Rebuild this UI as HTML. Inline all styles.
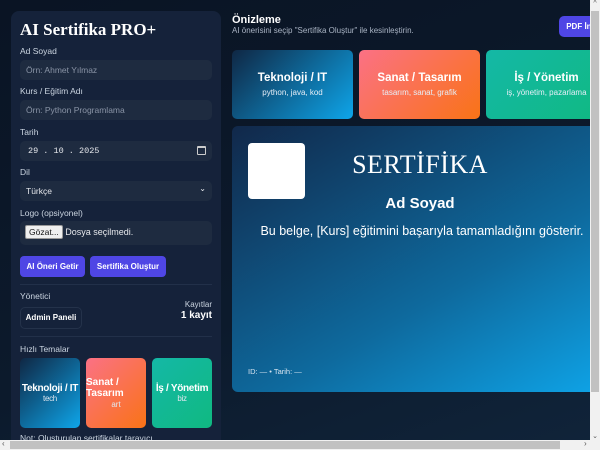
<!DOCTYPE html>
<html><head><meta charset="utf-8"><style>
*{box-sizing:border-box;margin:0;padding:0}
html,body{width:600px;height:450px;overflow:hidden}
body{background:linear-gradient(160deg,#0a1424 0%,#0c1a2c 60%,#10243a 100%);font-family:"Liberation Sans","DejaVu Sans",sans-serif;color:#e5e7eb;position:relative}
.panel{position:absolute;left:11px;top:11px;width:210px;height:460px;background:#15223a;border-radius:8px;padding:0 9px}
h1{font-family:"Liberation Serif",serif;font-size:17px;font-weight:bold;color:#fff;position:absolute;left:9px;top:9px}
.lbl{position:absolute;left:9px;font-size:8.5px;color:#cbd5e1}
.inp{position:absolute;left:9px;width:192px;height:20px;background:#1e2b40;border-radius:5px;font-size:8.5px;color:#8a94a6;padding:6px 6px;line-height:8px}
.btn{position:absolute;height:21px;background:#4f46e5;border-radius:4px;color:#fff;font-size:8px;font-weight:bold;text-align:center;line-height:21px}
.hr{position:absolute;left:9px;width:192px;height:1px;background:#223049}
.tq{position:absolute;width:60px;height:70px;border-radius:5px;color:#fff;text-align:center;font-weight:bold;font-size:10px;white-space:nowrap}
.tq small{display:block;font-weight:normal;font-size:8px;color:#e0e7ef}
.card{position:absolute;top:50px;height:69px;width:121px;border-radius:5px;text-align:center;color:#fff;font-weight:bold;font-size:11.5px;padding-top:22px}
.card small{display:block;font-weight:normal;font-size:8px;margin-top:4px;color:#e5eef7}
.tech{background:linear-gradient(135deg,#0f2744,#0ea5e9)}
.art{background:linear-gradient(135deg,#fb7185,#f97316)}
.biz{background:linear-gradient(135deg,#14b8a6,#10b981)}
</style></head><body>
<div class="panel">
<h1>AI Sertifika PRO+</h1>
<div class="lbl" style="top:35px">Ad Soyad</div>
<div class="inp" style="top:49px">Örn: Ahmet Yılmaz</div>
<div class="lbl" style="top:75px">Kurs / Eğitim Adı</div>
<div class="inp" style="top:89px">Örn: Python Programlama</div>
<div class="lbl" style="top:116px">Tarih</div>
<div class="inp" style="top:130px;color:#e5e7eb;font-family:'Liberation Mono',monospace;padding-left:8px">29 . 10 . 2025<span style="position:absolute;right:6px;top:5px;width:9px;height:9px;border:1.3px solid #ccc;border-radius:1px;border-top-width:2.5px"></span></div>
<div class="lbl" style="top:156px">Dil</div>
<div class="inp" style="top:170px;color:#e5e7eb">Türkçe<span style="position:absolute;right:6px;top:4px;font-size:8px">⌄</span></div>
<div class="lbl" style="top:197px">Logo (opsiyonel)</div>
<div class="inp" style="top:210px;height:24px;color:#e5e7eb;padding:4px 5px;font-size:9px"><span style="display:inline-block;background:#efefef;color:#111;border:1px solid #999;border-radius:2px;padding:2px 3px;font-size:8.5px">Gözat...</span> Dosya seçilmedi.</div>
<div class="btn" style="left:9px;top:245px;width:65px">AI Öneri Getir</div>
<div class="btn" style="left:79px;top:245px;width:76px">Sertifika Oluştur</div>
<div class="hr" style="top:273px"></div>
<div class="lbl" style="top:280px">Yönetici</div>
<div style="position:absolute;left:9px;top:296px;width:62px;height:22px;border:1px solid #24324a;border-radius:5px;font-size:8px;font-weight:bold;color:#fff;text-align:center;line-height:20px">Admin Paneli</div>
<div style="position:absolute;right:9px;top:288px;text-align:right;font-size:8px;color:#cbd5e1;line-height:11px">Kayıtlar<br><b style="color:#fff;font-size:10px">1 kayıt</b></div>
<div class="hr" style="top:325px"></div>
<div class="lbl" style="top:333px">Hızlı Temalar</div>
<div class="tq tech" style="left:9px;top:347px;padding-top:25px;letter-spacing:-0.3px">Teknoloji / IT<small>tech</small></div>
<div class="tq art" style="left:75px;top:347px;text-align:left;padding-top:19px;line-height:11px">Sanat /<br>Tasarım<small style="text-align:center">art</small></div>
<div class="tq biz" style="left:141px;top:347px;padding-top:25px;letter-spacing:-0.3px">İş / Yönetim<small>biz</small></div>
<div class="lbl" style="top:422px">Not: Oluşturulan sertifikalar tarayıcı</div>
</div>
<div style="position:absolute;left:232px;top:14px;font-size:11px;font-weight:bold;color:#fff">Önizleme</div>
<div style="position:absolute;left:232px;top:26px;font-size:8px;color:#aab4c4">AI önerisini seçip "Sertifika Oluştur" ile kesinleştirin.</div>
<div class="btn" style="left:559px;top:16px;width:50px;border-radius:5px;height:21px">PDF İndir</div>
<div class="card tech" style="left:232px">Teknoloji / IT<small>python, java, kod</small></div>
<div class="card art" style="left:359px">Sanat / Tasarım<small>tasarım, sanat, grafik</small></div>
<div class="card biz" style="left:486px">İş / Yönetim<small>iş, yönetim, pazarlama</small></div>
<div style="position:absolute;left:232px;top:126px;width:380px;height:266px;border-radius:6px;background:linear-gradient(150deg,#11284a 0%,#0e6a9e 60%,#0ea5e9 100%)"></div>
<div style="position:absolute;left:248px;top:143px;width:57px;height:56px;background:#fff;border-radius:4px"></div>
<div style="position:absolute;left:300px;width:240px;top:150px;text-align:center;font-family:'Liberation Serif',serif;font-size:26px;color:#fff;letter-spacing:0.5px">SERTİFİKA</div>
<div style="position:absolute;left:300px;width:240px;top:195px;text-align:center;font-size:15px;font-weight:bold;color:#fff">Ad Soyad</div>
<div style="position:absolute;left:232px;width:380px;top:224px;text-align:center;font-size:12.5px;color:#fff">Bu belge, [Kurs] eğitimini başarıyla tamamladığını gösterir.</div>
<div style="position:absolute;left:248px;top:367px;font-size:7.5px;color:#d6e4f0">ID: — • Tarih: —</div>
<div style="position:absolute;left:590px;top:0;width:10px;height:440px;background:#f1f1f1"><div style="position:absolute;left:1px;top:11px;width:8px;height:381px;background:#c1c1c1"></div><div style="position:absolute;top:0;width:10px;font-size:7px;text-align:center;color:#555">^</div><div style="position:absolute;bottom:0;width:10px;font-size:7px;text-align:center;color:#555">⌄</div></div>
<div style="position:absolute;left:0;top:440px;width:600px;height:10px;background:#f1f1f1"><div style="position:absolute;left:10px;top:1px;width:550px;height:8px;background:#c1c1c1"></div><div style="position:absolute;left:2px;top:-1px;font-size:8px;color:#555">‹</div><div style="position:absolute;left:584px;top:-1px;font-size:8px;color:#555">›</div></div>
</body></html>
